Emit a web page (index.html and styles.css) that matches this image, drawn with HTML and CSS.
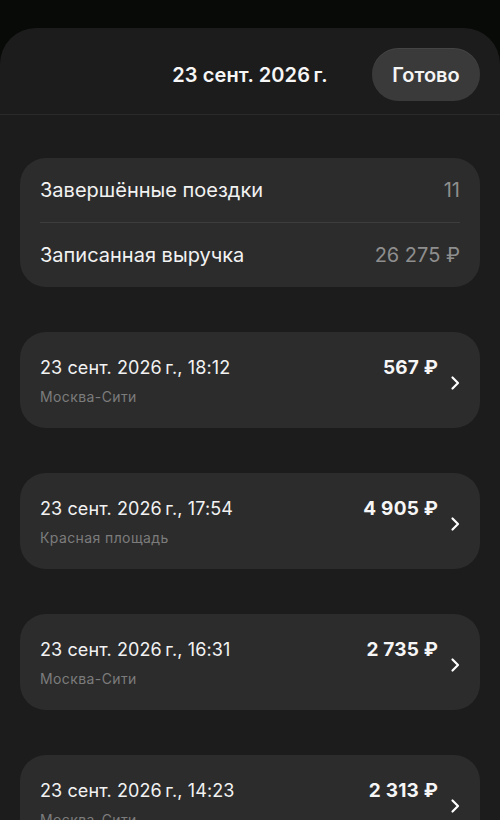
FILE: index.html
```html
<!DOCTYPE html>
<html lang="ru">
<head>
<meta charset="utf-8">
<link rel="stylesheet" href="styles.css">
</head>
<body>
<div class="sheet">
  <header class="header">
    <div></div>
    <div class="title">23 сент. 2026&#8201;г.</div>
    <div class="right"><button class="done">Готово</button></div>
  </header>
  <main class="content">
    <section class="summary">
      <div class="srow"><span class="slabel">Завершённые поездки</span><span class="svalue">11</span></div>
      <div class="sdivider"></div>
      <div class="srow"><span class="slabel">Записанная выручка</span><span class="svalue">26 275 ₽</span></div>
    </section>

    <div class="trip">
      <div class="tinfo">
        <div class="tdate">23 сент. 2026&#8201;г., 18:12</div>
        <div class="tplace">Москва-Сити</div>
      </div>
      <div class="tamount">567 ₽</div>
      <svg class="chev" viewBox="0 0 10 16" width="10" height="16"><path d="M2.5 2.5 L8 8 L2.5 13.5" fill="none" stroke="#fff" stroke-width="2.2" stroke-linecap="round" stroke-linejoin="round"/></svg>
    </div>

    <div class="trip">
      <div class="tinfo">
        <div class="tdate">23 сент. 2026&#8201;г., 17:54</div>
        <div class="tplace">Красная площадь</div>
      </div>
      <div class="tamount">4 905 ₽</div>
      <svg class="chev" viewBox="0 0 10 16" width="10" height="16"><path d="M2.5 2.5 L8 8 L2.5 13.5" fill="none" stroke="#fff" stroke-width="2.2" stroke-linecap="round" stroke-linejoin="round"/></svg>
    </div>

    <div class="trip">
      <div class="tinfo">
        <div class="tdate">23 сент. 2026&#8201;г., 16:31</div>
        <div class="tplace">Москва-Сити</div>
      </div>
      <div class="tamount">2 735 ₽</div>
      <svg class="chev" viewBox="0 0 10 16" width="10" height="16"><path d="M2.5 2.5 L8 8 L2.5 13.5" fill="none" stroke="#fff" stroke-width="2.2" stroke-linecap="round" stroke-linejoin="round"/></svg>
    </div>

    <div class="trip">
      <div class="tinfo">
        <div class="tdate">23 сент. 2026&#8201;г., 14:23</div>
        <div class="tplace">Москва-Сити</div>
      </div>
      <div class="tamount">2 313 ₽</div>
      <svg class="chev" viewBox="0 0 10 16" width="10" height="16"><path d="M2.5 2.5 L8 8 L2.5 13.5" fill="none" stroke="#fff" stroke-width="2.2" stroke-linecap="round" stroke-linejoin="round"/></svg>
    </div>
  </main>
</div>
</body>
</html>
```
FILE: styles.css
```css
* { box-sizing: border-box; }
html, body { margin: 0; padding: 0; }
body {
  background: #070a06;
  font-family: Inter, "Noto Sans", "Liberation Sans", sans-serif;
  color: #f4f4f4;
  height: 820px;
  overflow: hidden;
}
.sheet {
  margin-top: 28px;
  background: #1c1c1c;
  border-radius: 36px 36px 0 0;
  min-height: 792px;
}
.header {
  display: grid;
  grid-template-columns: 1fr auto 1fr;
  align-items: center;
  padding: 20px 20px 13px;
  border-bottom: 1px solid #2a2a2a;
}
.title {
  font-size: 20px;
  font-weight: 600;
  letter-spacing: 0.1px;
  color: #f6f6f6;
}
.right { display: flex; justify-content: flex-end; }
.done {
  width: 108px;
  height: 53px;
  border: none;
  border-radius: 27px;
  background: #3a3a3a;
  color: #f4f4f4;
  font-family: inherit;
  font-size: 20px;
  font-weight: 600;
  box-shadow: inset 0 1px 0 rgba(255,255,255,0.06);
}
.content {
  padding: 43px 20px 0;
  display: flex;
  flex-direction: column;
  gap: 45px;
}
.summary {
  background: #2c2c2c;
  border-radius: 26px;
  padding: 0 20px;
}
.srow {
  display: flex;
  justify-content: space-between;
  align-items: center;
  height: 64px;
  font-size: 20px;
}
.slabel { color: #f2f2f2; }
.svalue { color: #8e8e8e; }
.sdivider { height: 1px; background: #3d3d3d; }
.trip {
  background: #2c2c2c;
  border-radius: 26px;
  height: 96px;
  padding: 25px 20px 22px;
  display: flex;
  align-items: flex-start;
}
.tinfo { flex: 1; }
.tdate {
  font-size: 18px;
  line-height: 22px;
  letter-spacing: 0.1px;
  color: #f2f2f2;
}
.tplace {
  margin-top: 9px;
  font-size: 14px;
  line-height: 18px;
  letter-spacing: 0.4px;
  color: #7c7c7c;
}
.tamount {
  font-size: 19px;
  line-height: 22px;
  font-weight: 700;
  letter-spacing: 0.2px;
  color: #f6f6f6;
}
.chev {
  align-self: center;
  margin-left: 12px;
  margin-top: 3px;
}
```
